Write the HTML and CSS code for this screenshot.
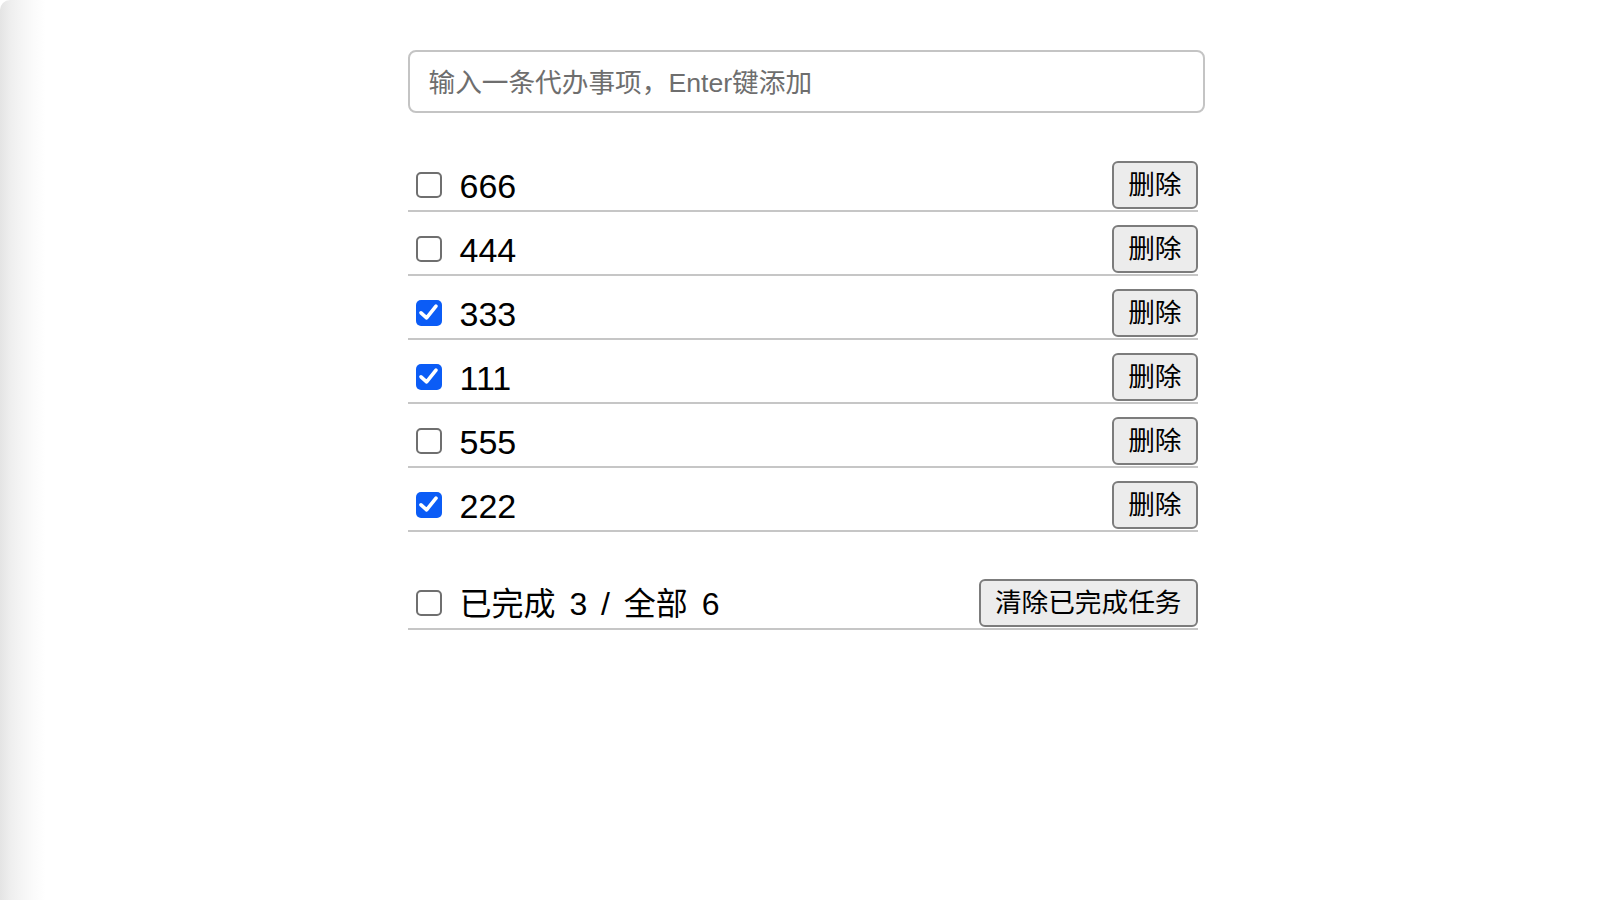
FILE: index.html
```html
<!DOCTYPE html>
<html lang="zh-CN">
<head>
<meta charset="utf-8">
<title>Todo</title>
<link rel="stylesheet" href="styles.css">
</head>
<body>
<div class="window">
  <div class="todo">
    <div class="todo-header">
      <input class="new-todo" type="text" placeholder="输入一条代办事项，Enter键添加">
    </div>
    <ul class="todo-list">
      <li class="item">
        <label class="item-label"><span class="box"></span><span class="title">666</span></label>
        <button class="btn">删除</button>
      </li>
      <li class="item">
        <label class="item-label"><span class="box"></span><span class="title">444</span></label>
        <button class="btn">删除</button>
      </li>
      <li class="item">
        <label class="item-label"><span class="box checked"><svg viewBox="0 0 26 26" width="26" height="26"><path d="M5 12.8 L10.6 17.8 L20 6.2" fill="none" stroke="#fff" stroke-width="3.6" stroke-linecap="round" stroke-linejoin="round"/></svg></span><span class="title">333</span></label>
        <button class="btn">删除</button>
      </li>
      <li class="item">
        <label class="item-label"><span class="box checked"><svg viewBox="0 0 26 26" width="26" height="26"><path d="M5 12.8 L10.6 17.8 L20 6.2" fill="none" stroke="#fff" stroke-width="3.6" stroke-linecap="round" stroke-linejoin="round"/></svg></span><span class="title">111</span></label>
        <button class="btn">删除</button>
      </li>
      <li class="item">
        <label class="item-label"><span class="box"></span><span class="title">555</span></label>
        <button class="btn">删除</button>
      </li>
      <li class="item">
        <label class="item-label"><span class="box checked"><svg viewBox="0 0 26 26" width="26" height="26"><path d="M5 12.8 L10.6 17.8 L20 6.2" fill="none" stroke="#fff" stroke-width="3.6" stroke-linecap="round" stroke-linejoin="round"/></svg></span><span class="title">222</span></label>
        <button class="btn">删除</button>
      </li>
    </ul>
    <div class="todo-footer">
      <label class="item-label"><span class="box"></span><span class="title summary">已完成 3 / 全部 6</span></label>
      <button class="btn">清除已完成任务</button>
    </div>
  </div>
</div>
</body>
</html>
```

FILE: styles.css
```css
html {
  background: #ffffff;
}
body {
  margin: 0;
  font-family: "Liberation Sans", "Noto Sans CJK SC", sans-serif;
  color: #000;
}
.window {
  min-height: 900px;
  box-sizing: border-box;
  padding: 50px 0 0 10px;
  border-top-left-radius: 10px;
  background: linear-gradient(to right, #e4e4e4 0px, #eeeeee 10px, #f5f5f5 22px, #fbfbfb 34px, #ffffff 46px);
}
.todo {
  width: 797px;
  margin: 0 auto;
}
.todo-header {
  display: flex;
}
.new-todo {
  width: 797px;
  height: 63px;
  box-sizing: border-box;
  border: 2px solid #c4c4c4;
  border-radius: 8px;
  padding: 3px 19px 0 19px;
  font-family: "Liberation Sans", "Noto Sans CJK SC", sans-serif;
  font-size: 26.67px;
  color: #000;
  outline: none;
  background: #fff;
}
.new-todo::placeholder {
  color: #6e6e6e;
}
.todo-list {
  list-style: none;
  margin: 35px 0 0 0;
  padding: 0;
  width: 790px;
}
.item {
  display: flex;
  align-items: center;
  justify-content: space-between;
  height: 64px;
  box-sizing: border-box;
  padding: 12px 0 0 8px;
  border-bottom: 2px solid #c6c6c6;
}
.item-label {
  display: flex;
  align-items: center;
}
.box {
  width: 26px;
  height: 26px;
  box-sizing: border-box;
  border: 2px solid #6f6f6f;
  border-radius: 5px;
  background: #fff;
  margin-right: 18px;
  flex: none;
  display: flex;
}
.box.checked {
  border: none;
  background: #0b5cf6;
}
.box svg {
  display: block;
}
.title {
  font-size: 34px;
  line-height: 38px;
  padding-top: 2px;
}
.summary {
  font-size: 32px;
  word-spacing: 5px;
}
.btn {
  height: 48px;
  box-sizing: border-box;
  padding: 0 14px;
  border: 2px solid #7c7c7c;
  border-radius: 6px;
  background: #ececec;
  font-family: "Liberation Sans", "Noto Sans CJK SC", sans-serif;
  font-size: 26.67px;
  color: #000;
  line-height: 1;
}
.todo-footer {
  width: 790px;
  display: flex;
  align-items: center;
  justify-content: space-between;
  height: 64px;
  box-sizing: border-box;
  margin-top: 34px;
  padding: 12px 0 0 8px;
  border-bottom: 2px solid #c6c6c6;
}
```
